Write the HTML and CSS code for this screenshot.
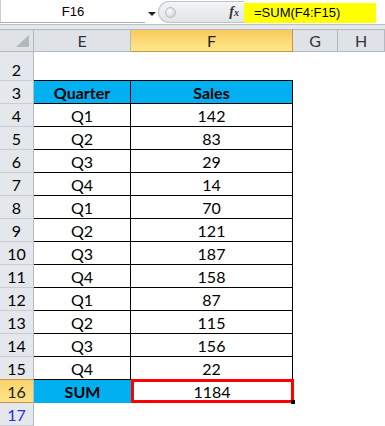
FILE: index.html
```html
<!DOCTYPE html>
<html lang="en">
<head>
  <meta charset="UTF-8" />
  <meta name="viewport" content="width=device-width, initial-scale=1.0" />
  <title>SUM of Sales</title>
  <link rel="stylesheet" href="styles.css">
</head>
<body>
  <header class="formula-bar">
    <div class="name-box">F16</div>
    <div class="name-arrow"></div>
    <div class="fx-box">
      <span class="grip"></span>
      <span class="fx">f<sub>x</sub></span>
    </div>
    <div class="formula">=SUM(F4:F15)</div>
  </header>
  <div class="bar-gap"></div>

  <section class="sheet" id="sheet">
    <div class="row head">
      <div class="corner"></div>
      <div class="col">E</div>
      <div class="col selected">F</div>
      <div class="col">G</div>
      <div class="col">H</div>
    </div>
    <div class="row tall">
      <div class="num">2</div>
      <div class="cell boxed-bottom"></div>
      <div class="cell boxed-bottom"></div>
      <div class="cell"></div>
      <div class="cell"></div>
    </div>
    <div class="row">
      <div class="num">3</div>
      <div class="cell boxed title">Quarter</div>
      <div class="cell boxed title">Sales</div>
      <div class="cell"></div>
      <div class="cell"></div>
    </div>
    <div class="row"><div class="num">4</div><div class="cell boxed">Q1</div><div class="cell boxed">142</div><div class="cell"></div><div class="cell"></div></div>
    <div class="row"><div class="num">5</div><div class="cell boxed">Q2</div><div class="cell boxed">83</div><div class="cell"></div><div class="cell"></div></div>
    <div class="row"><div class="num">6</div><div class="cell boxed">Q3</div><div class="cell boxed">29</div><div class="cell"></div><div class="cell"></div></div>
    <div class="row"><div class="num">7</div><div class="cell boxed">Q4</div><div class="cell boxed">14</div><div class="cell"></div><div class="cell"></div></div>
    <div class="row"><div class="num">8</div><div class="cell boxed">Q1</div><div class="cell boxed">70</div><div class="cell"></div><div class="cell"></div></div>
    <div class="row"><div class="num">9</div><div class="cell boxed">Q2</div><div class="cell boxed">121</div><div class="cell"></div><div class="cell"></div></div>
    <div class="row"><div class="num">10</div><div class="cell boxed">Q3</div><div class="cell boxed">187</div><div class="cell"></div><div class="cell"></div></div>
    <div class="row"><div class="num">11</div><div class="cell boxed">Q4</div><div class="cell boxed">158</div><div class="cell"></div><div class="cell"></div></div>
    <div class="row"><div class="num">12</div><div class="cell boxed">Q1</div><div class="cell boxed">87</div><div class="cell"></div><div class="cell"></div></div>
    <div class="row"><div class="num">13</div><div class="cell boxed">Q2</div><div class="cell boxed">115</div><div class="cell"></div><div class="cell"></div></div>
    <div class="row"><div class="num">14</div><div class="cell boxed">Q3</div><div class="cell boxed">156</div><div class="cell"></div><div class="cell"></div></div>
    <div class="row"><div class="num">15</div><div class="cell boxed">Q4</div><div class="cell boxed">22</div><div class="cell"></div><div class="cell"></div></div>
    <div class="row">
      <div class="num selected">16</div>
      <div class="cell sum-label">SUM</div>
      <div class="cell active">1184<span class="handle"></span></div>
      <div class="cell"></div>
      <div class="cell"></div>
    </div>
    <div class="row">
      <div class="num blue">17</div>
      <div class="cell"></div>
      <div class="cell"></div>
      <div class="cell"></div>
      <div class="cell"></div>
    </div>
  </section>
</body>
</html>
```

FILE: styles.css
```css
body {
  margin: 0;
  padding: 0;
  width: 385px;
  height: 426px;
  overflow: hidden;
  background: #fff;
  font-family: Lato, 'Noto Sans', sans-serif;
}

/* formula bar */
.formula-bar {
  display: flex;
  height: 25px;
  box-sizing: border-box;
  border-bottom: 1px solid #b9bfc8;
  background: #fff;
  font-family: 'Liberation Sans', Arial, sans-serif;
  font-size: 13px;
  color: #000;
}

.name-box {
  width: 145px;
  height: 23px;
  box-sizing: border-box;
  border-left: 1px solid #c9ccd1;
  border-bottom: 1px solid #a9b0ba;
  text-align: center;
  line-height: 24px;
}

.name-arrow {
  width: 13px;
  display: flex;
  align-items: center;
  justify-content: center;
}

.name-arrow::before {
  content: "";
  border-left: 4px solid transparent;
  border-right: 4px solid transparent;
  border-top: 4px solid #222;
  margin-top: 3px;
}

.fx-box {
  width: 86px;
  height: 22px;
  margin-top: 1px;
  box-sizing: border-box;
  display: flex;
  align-items: center;
  justify-content: space-between;
  padding: 0 5px 0 6px;
  background: linear-gradient(to bottom, #f3f4f6, #e1e4e8);
  border: 1px solid #bfc4cb;
  border-right: none;
  border-radius: 11px 0 0 11px;
}

.grip {
  width: 9px;
  height: 9px;
  border-radius: 50%;
  background: radial-gradient(circle at 40% 35%, #fbfbfb, #c7cbd0);
  border: 1px solid #b9bdc3;
}

.fx {
  font-family: 'Liberation Serif', 'Times New Roman', serif;
  font-style: italic;
  font-weight: bold;
  font-size: 14px;
  color: #333;
}

.fx sub {
  font-size: 10px;
  vertical-align: 0;
}

.formula {
  width: 132px;
  height: 20px;
  margin-top: 3px;
  background: #ffff00;
  padding-left: 10px;
  box-sizing: border-box;
  line-height: 20px;
}

.bar-gap {
  height: 4px;
  background: #e6e8eb;
}

/* grid */
.row {
  display: grid;
  grid-template-columns: 34px 97px 162px 45px 1fr;
  height: 23px;
}

.row.tall {
  height: 29px;
}

.row > div {
  box-sizing: border-box;
  border-bottom: 1px solid transparent;
  text-align: center;
  font-size: 16px;
  line-height: 20px;
  padding-top: 2px;
  color: #000;
}

.row.tall > div {
  padding-top: 8px;
}

.head > div {
  background: #dfe3e8;
  border-top: 1px solid #b4bac3;
  border-bottom: 1px solid #b4bac3;
  border-right: 1px solid #b4bac3;
  color: #333;
  padding-top: 1px;
}

.head .corner {
  position: relative;
  background: #dfe3e8;
}

.corner::after {
  content: "";
  position: absolute;
  right: 4px;
  bottom: 4px;
  border-left: 13px solid transparent;
  border-bottom: 12px solid #b2b7be;
}

.head .col.selected {
  background: linear-gradient(to bottom, #f8ca5b, #ffe88c);
  border-color: #c4963f;
  border-top-color: #b4bac3;
  color: #222;
}

.num {
  background: #e4e7eb;
  border-right: 1px solid #b4bac3;
  color: #333;
}

.row > .num {
  border-bottom: 1px solid #c8cdd4;
}

.row > .num.selected {
  background: linear-gradient(to bottom, #f9d36c, #ffe38a);
  border-top: 1px solid #c4963f;
  border-bottom: 1px solid #c4963f;
  margin-top: -1px;
  color: #222;
}

.num.blue {
  color: #2b2bf0;
}

.row > .cell.boxed-bottom {
  border-bottom: 1px solid #000;
}

.row > .cell.boxed {
  border-bottom: 1px solid #000;
  border-right: 1px solid #000;
}

.cell.title {
  background: #00b0f0;
  font-weight: bold;
}

.cell.sum-label {
  background: #00b0f0;
  font-weight: bold;
}

.cell.active {
  position: relative;
}

.cell.active::before {
  content: "";
  position: absolute;
  left: 0;
  top: -1px;
  right: -1px;
  bottom: -1px;
  border: 3px solid #ff0000;
}

.handle {
  position: absolute;
  right: -3px;
  bottom: -3px;
  width: 4px;
  height: 4px;
  background: #000;
  border: 1px solid #fff;
  border-top: none;
  border-left: none;
}
```
